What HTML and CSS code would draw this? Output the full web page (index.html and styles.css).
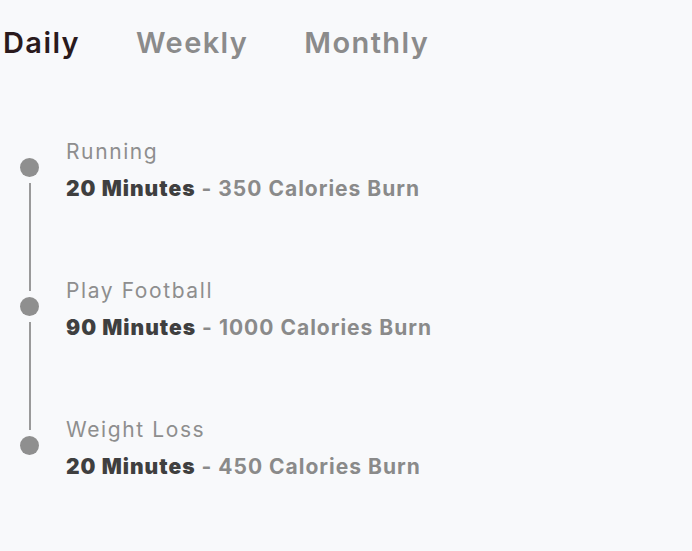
FILE: index.html
```html
<!DOCTYPE html>
<html>
<head>
<meta charset="utf-8">
<link rel="stylesheet" href="styles.css">
</head>
<body>
<div class="page">
  <nav class="tabs">
    <span class="tab active">Daily</span>
    <span class="tab">Weekly</span>
    <span class="tab">Monthly</span>
  </nav>
  <div class="timeline">
    <div class="item first">
      <div class="rail"><span class="seg top"></span><span class="dot"></span><span class="seg bottom"></span></div>
      <div class="text">
        <div class="name">Running</div>
        <div class="detail"><strong>20 Minutes</strong> - 350 Calories Burn</div>
      </div>
    </div>
    <div class="item">
      <div class="rail"><span class="seg top"></span><span class="dot"></span><span class="seg bottom"></span></div>
      <div class="text">
        <div class="name">Play Football</div>
        <div class="detail"><strong>90 Minutes</strong> - 1000 Calories Burn</div>
      </div>
    </div>
    <div class="item last">
      <div class="rail"><span class="seg top"></span><span class="dot"></span><span class="seg bottom"></span></div>
      <div class="text">
        <div class="name">Weight Loss</div>
        <div class="detail"><strong>20 Minutes</strong> - 450 Calories Burn</div>
      </div>
    </div>
  </div>
</div>
</body>
</html>
```
FILE: styles.css
```css
* { box-sizing: border-box; }
html, body { margin: 0; padding: 0; background: #f8f9fb; }
body { font-family: Inter, "Noto Sans", sans-serif; }
.page { padding: 22px 0 0 3px; width: 692px; height: 551px; }
.tabs { display: flex; gap: 56px; height: 40px; align-items: center; }
.tab { font-size: 29px; font-weight: 600; color: #8b8b8b; letter-spacing: 1.4px; }
.tab.active { color: #2a1a1d; }
.timeline { margin-top: 78px; display: flex; flex-direction: column; }
.item { display: flex; height: 139px; }
.rail { width: 53px; display: flex; flex-direction: column; align-items: center; }
.seg { width: 2px; background: #9a9a9a; }
.seg.top { height: 12px; margin-bottom: 6px; }
.seg.bottom { flex: 1; margin-top: 6px; }
.first .seg.top, .last .seg.bottom { visibility: hidden; }
.dot { width: 19px; height: 19px; border-radius: 50%; background: #8f8f8f; flex: none; }
.text { padding-left: 10px; }
.name { font-size: 21px; line-height: 24px; color: #8e8e8e; letter-spacing: 1.6px; }
.detail { margin-top: 13px; font-size: 21px; line-height: 24px; font-weight: 700; color: #8a8a8a; letter-spacing: 1px; }
.detail strong { color: #3f3f3f; }
```
